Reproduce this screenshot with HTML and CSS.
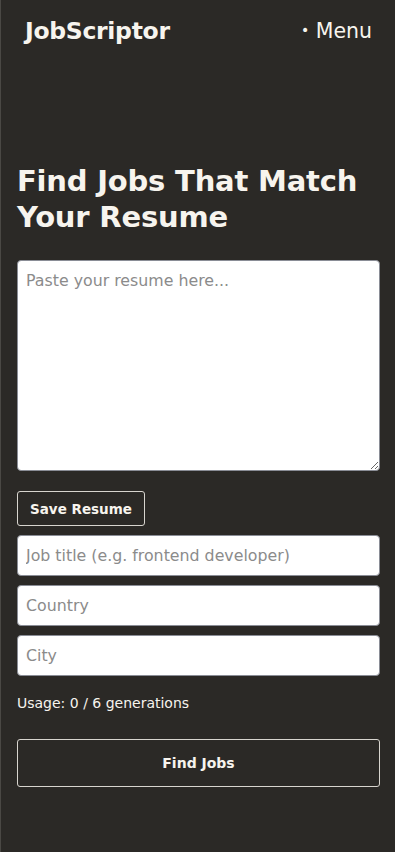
FILE: index.html
```html
<!DOCTYPE html>
<html lang="en">
<head>
  <meta charset="UTF-8" />
  <meta name="viewport" content="width=device-width, initial-scale=1.0"/>
  <title>JobScriptor</title>
  <link rel="stylesheet" href="styles.css">
</head>
<body>
  <header class="topbar">
    <a class="brand" href="#">JobScriptor</a>
    <button class="menu-btn"><span class="dot">•</span> Menu</button>
  </header>

  <main class="page">
    <h1 class="title">Find Jobs That Match Your Resume</h1>
    <form class="search-form" onsubmit="return false">
      <textarea class="resume" placeholder="Paste your resume here..."></textarea>
      <button type="button" class="btn-small">Save Resume</button>
      <input class="field" type="text" placeholder="Job title (e.g. frontend developer)">
      <input class="field" type="text" placeholder="Country">
      <input class="field" type="text" placeholder="City">
      <p class="usage">Usage: 0 / 6 generations</p>
      <button type="submit" class="btn-wide">Find Jobs</button>
    </form>
  </main>
</body>
</html>
```

FILE: styles.css
```css
* {
  box-sizing: border-box;
  margin: 0;
  padding: 0;
}

body {
  min-height: 100vh;
  background: #2b2926;
  color: #f7f4ee;
  font-family: 'DejaVu Sans', sans-serif;
  border-left: 1px solid #4a4844;
}

.topbar {
  display: flex;
  align-items: center;
  justify-content: space-between;
  height: 62px;
  padding: 0 23px 0 24px;
}

.brand {
  color: #f7f4ee;
  text-decoration: none;
  font-weight: bold;
  font-size: 23.5px;
  letter-spacing: -0.3px;
}

.menu-btn {
  background: none;
  border: none;
  color: #f7f4ee;
  font-family: inherit;
  font-size: 20.5px;
  cursor: pointer;
}

.menu-btn .dot {
  font-size: 14px;
  vertical-align: 3px;
}

.page {
  padding: 101px 15px 40px 16px;
}

.title {
  font-size: 29px;
  line-height: 36px;
  font-weight: bold;
  letter-spacing: -0.2px;
  margin-bottom: 25px;
}

.search-form {
  display: flex;
  flex-direction: column;
  align-items: flex-start;
}

.resume,
.field {
  width: 100%;
  background: #fff;
  border: 1px solid #8a8d96;
  border-radius: 4px;
  font-family: inherit;
  font-size: 15.8px;
  color: #222;
  padding: 10px 8px;
}

.resume::placeholder,
.field::placeholder {
  color: #8b8b8b;
}

.resume {
  height: 211px;
  resize: vertical;
  margin-bottom: 20px;
}

.field {
  height: 41px;
  margin-bottom: 9px;
}

.btn-small {
  background: transparent;
  color: #f7f4ee;
  border: 1px solid #d8d5cf;
  border-radius: 3px;
  font-family: inherit;
  font-weight: bold;
  font-size: 13.5px;
  height: 35px;
  padding: 0 12px;
  margin-bottom: 9px;
  cursor: pointer;
}

.usage {
  font-size: 14px;
  margin: 10px 0 28px;
}

.btn-wide {
  width: 100%;
  height: 48px;
  background: transparent;
  color: #f7f4ee;
  border: 1px solid #d8d5cf;
  border-radius: 3px;
  font-family: inherit;
  font-weight: bold;
  font-size: 14px;
  cursor: pointer;
}
```
